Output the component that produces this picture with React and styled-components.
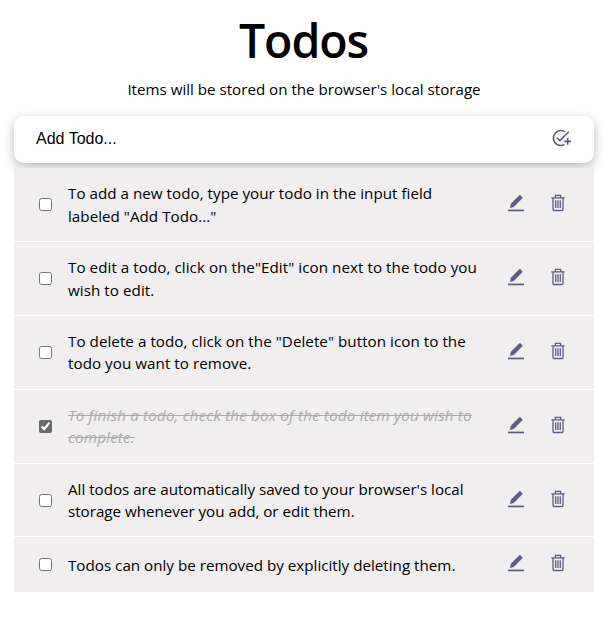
import React from "react";
import styled, { createGlobalStyle } from "styled-components";
import { MdOutlineAddTask } from "react-icons/md";

const Global = createGlobalStyle`
  * { box-sizing: border-box; }
  body { margin: 0; background: #fff; color: #000; font-family: "Open Sans", "Noto Sans", sans-serif; }
`;
const Page = styled.main`
  padding: 0 14px;
  display: flex;
  flex-direction: column;
`;
const Title = styled.h1`
  margin: 7px 0 0 -1px;
  font-size: 46.5px;
  line-height: 66px;
  font-weight: 600;
  letter-spacing: -1.1px;
  text-align: center;
`;
const Subtitle = styled.p`
  margin: 5px 0 15px;
  font-size: 15.15px;
  line-height: 23px;
  text-align: center;
`;
const Form = styled.form`
  height: 47px;
  display: flex;
  align-items: center;
  padding: 0 23px 3px 22px;
  border-radius: 10px;
  background: #fff;
  box-shadow: 0 4px 12px rgba(0, 0, 0, 0.27);
`;
const Input = styled.input`
  flex: 1;
  min-width: 0;
  padding: 2px 0 0;
  border: 0;
  outline: 0;
  background: transparent;
  font: 16px "Liberation Sans", Arial, sans-serif;
  &::placeholder { color: #000; opacity: 1; }
`;
const IconButton = styled.button`
  display: flex;
  padding: 0;
  border: 0;
  background: none;
  color: #5d5b80;
  font-size: 20px;
`;
const List = styled.ul`
  margin: 5px 0 0;
  padding: 0;
  list-style: none;
  display: grid;
  gap: 1px;
`;
const Item = styled.li`
  display: flex;
  align-items: center;
  height: ${(p) => (p.$short ? 54.5 : 72.9)}px;
  padding: 0 29px 0 25px;
  background: #f0eeef;
`;
const Check = styled.input`
  width: 13px;
  height: 13px;
  margin: 0 16px 0 0;
  accent-color: #6b6b6b;
`;
const Label = styled.span`
  width: 430px;
  padding-top: 0.4px;
  font-size: 15.2px;
  line-height: 22.4px;
  white-space: pre-line;
  letter-spacing: ${(p) => p.$tracking || 0}px;
  color: ${(p) => (p.$done ? "#aaa" : "#000")};
  font-style: ${(p) => (p.$done ? "italic" : "normal")};
  text-decoration: ${(p) => (p.$done ? "line-through" : "none")};
`;
const Actions = styled.div`
  margin-left: auto;
  padding-bottom: 3px;
  display: flex;
  gap: 27px;
`;
const Glyph = styled.svg`
  display: block;
  width: ${(p) => p.$w}px;
  height: 18px;
  fill: currentColor;
`;

const EditIcon = () => (
  <Glyph $w={16} viewBox="0 0 16 18">
    <path d="M0 15.6h16v1.7H0z" />
    <path
      d="M2.4 13.7 3 9.8 11.3 1.6a.8.8 0 0 1 1.1 0L14 3.2a.8.8 0 0 1 0 1.1L6.1 12.4Z"
      stroke="currentColor"
      strokeWidth=".5"
    />
  </Glyph>
);
const DeleteIcon = () => (
  <Glyph $w={14} viewBox="0 0 14 18">
    <path
      d="M.3 3.9h13.4M4.4 3.7V1.3h5.2v2.4M2 4v11.3q0 1.2 1.2 1.2h7.6q1.2 0 1.2-1.2V4M4.7 6.3v7.8M7 6.3v7.8M9.3 6.3v7.8"
      fill="none"
      stroke="currentColor"
      strokeWidth="1.3"
    />
  </Glyph>
);

const todos = [
  { text: 'To add a new todo, type your todo in the input field\nlabeled "Add Todo..."', tracking: 0.02 },
  { text: 'To edit a todo, click on the"Edit" icon next to the todo you\nwish to edit.', tracking: 0.05 },
  { text: 'To delete a todo, click on the "Delete" button icon to the\ntodo you want to remove.', tracking: 0.04 },
  { text: "To finish a todo, check the box of the todo item you wish to\ncomplete.", done: true, tracking: 0.17 },
  { text: "All todos are automatically saved to your browser's local\nstorage whenever you add, or edit them.", tracking: -0.02 },
  { text: "Todos can only be removed by explicitly deleting them.", short: true },
];

export default function App() {
  return (
    <Page>
      <Global />
      <Title>Todos</Title>
      <Subtitle>Items will be stored on the browser's local storage</Subtitle>
      <Form>
        <Input placeholder="Add Todo..." />
        <IconButton type="button" aria-label="Add"><MdOutlineAddTask /></IconButton>
      </Form>
      <List>
        {todos.map((t) => (
          <Item key={t.text} $short={t.short}>
            <Check type="checkbox" defaultChecked={t.done} />
            <Label $done={t.done} $tracking={t.tracking}>{t.text}</Label>
            <Actions>
              <IconButton aria-label="Edit"><EditIcon /></IconButton>
              <IconButton aria-label="Delete"><DeleteIcon /></IconButton>
            </Actions>
          </Item>
        ))}
      </List>
    </Page>
  );
}
